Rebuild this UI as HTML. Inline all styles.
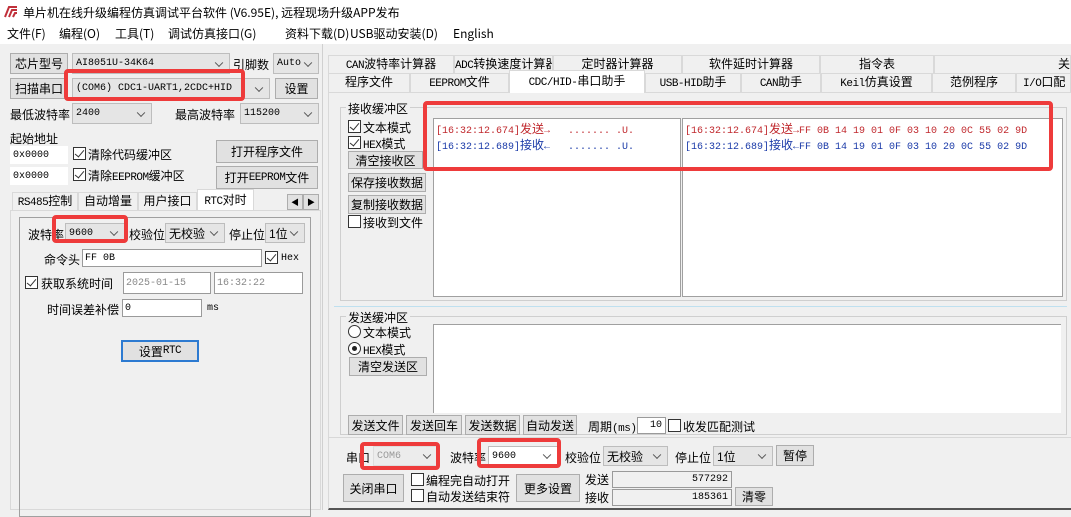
<!DOCTYPE html><html><head><meta charset="utf-8"><style>
*{box-sizing:border-box;margin:0;padding:0}
body{width:1071px;height:510px;overflow:hidden;background:#f0f0f0;font:12px "Liberation Sans","Noto Sans CJK SC",sans-serif;color:#000;position:relative}
.a{position:absolute;white-space:nowrap}
.btn{position:absolute;background:#e1e1e1;border:1px solid #adadad;text-align:center;display:flex;align-items:center;justify-content:center;white-space:nowrap;font-size:12px}
.cb{position:absolute;background:#e5e5e5;border:1px solid #bdbdbd;padding-left:3px;display:flex;align-items:center;font-family:"Liberation Mono","Noto Sans CJK SC",monospace;font-size:10px;white-space:nowrap;overflow:hidden}
.cb.z{font-family:"Liberation Sans","Noto Sans CJK SC",sans-serif;font-size:12px}
.cb::after{content:"";position:absolute;right:7px;top:50%;width:5px;height:5px;border-right:1px solid #555;border-bottom:1px solid #555;transform:translateY(-70%) rotate(45deg)}
.in{position:absolute;background:#fff;border:1px solid #9a9a9a;padding-left:2px;display:flex;align-items:center;font-family:"Liberation Mono",monospace;font-size:10px}
.ck{position:absolute;width:13px;height:13px;border:1px solid #333;background:#fff}
.ck.on::after{content:"";position:absolute;left:3px;top:0px;width:4px;height:8px;border-right:1.5px solid #333;border-bottom:1.5px solid #333;transform:rotate(40deg)}
.rd{position:absolute;width:13px;height:13px;border:1px solid #333;border-radius:50%;background:#fff}
.rd.on::after{content:"";position:absolute;left:3px;top:3px;width:5px;height:5px;border-radius:50%;background:#222}
.red{position:absolute;border:4px solid #ee3b3b;border-radius:4px}
.tab{position:absolute;border:1px solid #d9d9d9;border-bottom:none;background:#f0f0f0;text-align:center;font-size:12px;line-height:17px;white-space:nowrap;overflow:hidden}
.m{font-family:"Liberation Mono",monospace;font-size:11px;letter-spacing:-0.5px}
.mono{font-family:"Liberation Mono","Noto Sans CJK SC",monospace;font-size:10px}
.mono b{font-weight:normal;font-family:"Noto Sans CJK SC",sans-serif;font-size:12px}
</style></head><body>
<div class="a" style="left:0;top:0;width:1071px;height:22px;background:#fff"></div>
<svg class="a" style="left:4px;top:4px" width="14" height="14"><path d="M1 13 L5 3 L13 3" stroke="#c0303a" stroke-width="2" fill="none"/><path d="M5 13 L8 6 L13 6 M9 13 L11 9 L13 9" stroke="#c0303a" stroke-width="2" fill="none"/></svg>
<div class="a" style="left:23px;top:4px;font-size:12px;font-family:'Noto Sans CJK SC',sans-serif">单片机在线升级编程仿真调试平台软件 (V6.95E), 远程现场升级APP发布</div>
<div class="a" style="left:0;top:22px;width:1071px;height:22px;background:#fff;font-size:12px;font-family:'Noto Sans CJK SC',sans-serif"><span class="a" style="left:7px;top:3px">文件(F)</span><span class="a" style="left:59px;top:3px">编程(O)</span><span class="a" style="left:115px;top:3px">工具(T)</span><span class="a" style="left:168px;top:3px">调试仿真接口(G)</span><span class="a" style="left:285px;top:3px">资料下载(D)</span><span class="a" style="left:350px;top:3px">USB驱动安装(D)</span><span class="a" style="left:453px;top:3px">English</span></div>

<!-- left -->
<div class="btn" style="left:10px;top:53px;width:58px;height:21px">芯片型号</div>
<div class="cb" style="left:72px;top:53px;width:158px;height:21px">AI8051U-34K64</div>
<div class="a" style="left:233px;top:56px">引脚数</div>
<div class="cb" style="left:273px;top:53px;width:46px;height:21px">Auto</div>
<div class="btn" style="left:10px;top:78px;width:58px;height:21px">扫描串口</div>
<div class="cb" style="left:72px;top:78px;width:198px;height:21px">(COM6) CDC1-UART1,2CDC+HID</div>
<div class="red" style="left:64px;top:69px;width:181px;height:32px"></div>
<div class="btn" style="left:275px;top:78px;width:43px;height:21px">设置</div>
<div class="a" style="left:10px;top:106px">最低波特率</div>
<div class="cb" style="left:72px;top:103px;width:80px;height:21px">2400</div>
<div class="a" style="left:175px;top:106px">最高波特率</div>
<div class="cb" style="left:240px;top:103px;width:79px;height:21px">115200</div>
<div class="a" style="left:10px;top:130px">起始地址</div>
<div class="in" style="left:10px;top:146px;width:58px;height:18px;border-color:#fff">0x0000</div>
<div class="ck on" style="left:73px;top:147px"></div><div class="a" style="left:88px;top:146px">清除代码缓冲区</div>
<div class="btn" style="left:216px;top:140px;width:102px;height:23px">打开程序文件</div>
<div class="in" style="left:10px;top:167px;width:58px;height:18px;border-color:#fff">0x0000</div>
<div class="ck on" style="left:73px;top:168px"></div><div class="a" style="left:88px;top:167px">清除<span class="m">EEPROM</span>缓冲区</div>
<div class="btn" style="left:216px;top:166px;width:102px;height:23px">打开<span class="m">EEPROM</span>文件</div>
<div class="tab" style="left:12px;top:192px;width:66px;height:19px"><span class="m">RS485</span>控制</div>
<div class="tab" style="left:78px;top:192px;width:60px;height:19px">自动增量</div>
<div class="tab" style="left:138px;top:192px;width:59px;height:19px">用户接口</div>
<div class="tab" style="left:197px;top:189px;width:57px;height:22px;background:#fff;line-height:20px"><span class="m">RTC</span>对时</div>
<div class="btn" style="left:287px;top:194px;width:16px;height:16px;font-size:8px">◀</div><div class="btn" style="left:303px;top:194px;width:16px;height:16px;font-size:8px">▶</div>
<div class="a" style="left:10px;top:210px;width:311px;height:300px;border:1px solid #d9d9d9;background:#f0f0f0"></div>
<div class="a" style="left:19px;top:217px;width:292px;height:300px;border:1px solid #a0a0a0"></div>
<div class="a" style="left:28px;top:226px">波特率</div>
<div class="cb" style="left:65px;top:223px;width:60px;height:20px">9600</div>
<div class="red" style="left:52px;top:215px;width:76px;height:28px"></div>
<div class="a" style="left:129px;top:226px">校验位</div>
<div class="cb z" style="left:165px;top:223px;width:60px;height:20px">无校验</div>
<div class="a" style="left:229px;top:226px">停止位</div>
<div class="cb z" style="left:265px;top:223px;width:40px;height:20px">1位</div>
<div class="a" style="left:44px;top:251px">命令头</div>
<div class="in" style="left:82px;top:249px;width:180px;height:18px">FF 0B</div>
<div class="ck on" style="left:265px;top:251px"></div><div class="a mono" style="left:281px;top:253px">Hex</div>
<div class="ck on" style="left:25px;top:276px"></div><div class="a" style="left:41px;top:275px">获取系统时间</div>
<div class="in" style="left:123px;top:272px;width:88px;height:22px;color:#888">2025-01-15</div>
<div class="in" style="left:214px;top:272px;width:89px;height:22px;color:#888">16:32:22</div>
<div class="a" style="left:47px;top:301px">时间误差补偿</div>
<div class="in" style="left:122px;top:299px;width:80px;height:18px">0</div>
<div class="a mono" style="left:207px;top:303px">ms</div>
<div class="btn" style="left:121px;top:340px;width:78px;height:22px;border:2px solid #2c7ad1">设置<span class="m">RTC</span></div>
<div class="a" style="left:322px;top:44px;width:1px;height:466px;background:#d0d0d0"></div>

<!-- right tabs -->
<div class="tab" style="left:328px;top:55px;width:126px;height:18px"><span class="m">CAN</span>波特率计算器</div>
<div class="tab" style="left:454px;top:55px;width:99px;height:18px"><span class="m">ADC</span>转换速度计算器</div>
<div class="tab" style="left:553px;top:55px;width:129px;height:18px">定时器计算器</div>
<div class="tab" style="left:682px;top:55px;width:138px;height:18px">软件延时计算器</div>
<div class="tab" style="left:820px;top:55px;width:114px;height:18px">指令表</div>
<div class="tab" style="left:934px;top:55px;width:137px;height:18px;text-align:right">关</div>
<div class="tab" style="left:328px;top:73px;width:82px;height:19px">程序文件</div>
<div class="tab" style="left:410px;top:73px;width:99px;height:19px"><span class="m">EEPROM</span>文件</div>
<div class="tab" style="left:509px;top:70px;width:136px;height:23px;background:#fff;line-height:20px;z-index:2"><span class="m">CDC/HID-</span>串口助手</div>
<div class="tab" style="left:645px;top:73px;width:96px;height:19px"><span class="m">USB-HID</span>助手</div>
<div class="tab" style="left:741px;top:73px;width:80px;height:19px"><span class="m">CAN</span>助手</div>
<div class="tab" style="left:821px;top:73px;width:111px;height:19px"><span class="m">Keil</span>仿真设置</div>
<div class="tab" style="left:932px;top:73px;width:84px;height:19px">范例程序</div>
<div class="tab" style="left:1016px;top:73px;width:55px;height:19px;text-align:left;padding-left:6px"><span class="m">I/O</span>口配</div>
<div class="a" style="left:328px;top:92px;width:745px;height:418px;border:1px solid #d9d9d9;border-bottom:2px solid #555"></div>

<div class="a" style="left:340px;top:107px;width:727px;height:194px;border:1px solid #cfcfcf"></div>
<div class="a" style="left:346px;top:100px;background:#f0f0f0;padding:0 2px">接收缓冲区</div>
<div class="ck on" style="left:348px;top:120px"></div><div class="a" style="left:363px;top:119px">文本模式</div>
<div class="ck on" style="left:348px;top:136px"></div><div class="a" style="left:363px;top:135px"><span class="m">HEX</span>模式</div>
<div class="btn" style="left:348px;top:151px;width:75px;height:18px">清空接收区</div>
<div class="btn" style="left:348px;top:173px;width:78px;height:19px">保存接收数据</div>
<div class="btn" style="left:348px;top:195px;width:78px;height:19px">复制接收数据</div>
<div class="ck" style="left:348px;top:215px"></div><div class="a" style="left:363px;top:214px">接收到文件</div>
<div class="a" style="left:433px;top:118px;width:248px;height:179px;background:#fff;border:1px solid #a0a0a0"></div>
<div class="a" style="left:682px;top:118px;width:381px;height:179px;background:#fff;border:1px solid #a0a0a0"></div>
<div class="a mono" style="left:436px;top:120px;color:#c0282d">[16:32:12.674]<b>发送</b>→&nbsp;&nbsp;&nbsp;....... .U.</div>
<div class="a mono" style="left:436px;top:136px;color:#1a3aa8">[16:32:12.689]<b>接收</b>←&nbsp;&nbsp;&nbsp;....... .U.</div>
<div class="a mono" style="left:685px;top:120px;color:#c0282d">[16:32:12.674]<b>发送</b>→FF 0B 14 19 01 0F 03 10 20 0C 55 02 9D</div>
<div class="a mono" style="left:685px;top:136px;color:#1a3aa8">[16:32:12.689]<b>接收</b>←FF 0B 14 19 01 0F 03 10 20 0C 55 02 9D</div>
<div class="red" style="left:423px;top:101px;width:630px;height:70px"></div>
<div class="a" style="left:334px;top:306px;width:733px;height:1px;background:#bfe0ef"></div>

<div class="a" style="left:340px;top:316px;width:727px;height:119px;border:1px solid #cfcfcf"></div>
<div class="a" style="left:346px;top:309px;background:#f0f0f0;padding:0 2px">发送缓冲区</div>
<div class="rd" style="left:348px;top:325px"></div><div class="a" style="left:363px;top:324px">文本模式</div>
<div class="rd on" style="left:348px;top:342px"></div><div class="a" style="left:363px;top:341px"><span class="m">HEX</span>模式</div>
<div class="btn" style="left:349px;top:357px;width:78px;height:19px">清空发送区</div>
<div class="a" style="left:433px;top:324px;width:628px;height:89px;background:#fff;border-top:1px solid #a0a0a0;border-left:1px solid #a0a0a0"></div>
<div class="btn" style="left:348px;top:415px;width:55px;height:20px">发送文件</div>
<div class="btn" style="left:406px;top:415px;width:56px;height:20px">发送回车</div>
<div class="btn" style="left:465px;top:415px;width:55px;height:20px">发送数据</div>
<div class="btn" style="left:523px;top:415px;width:54px;height:20px">自动发送</div>
<div class="a" style="left:588px;top:418px">周期<span class="m">(ms)</span></div>
<div class="in" style="left:637px;top:417px;width:29px;height:17px;justify-content:flex-end;padding-right:3px">10</div>
<div class="ck" style="left:668px;top:419px"></div><div class="a" style="left:683px;top:418px">收发匹配测试</div>
<div class="a" style="left:329px;top:437px;width:742px;height:1px;background:#d8d8d8"></div>

<div class="a" style="left:346px;top:449px">串口</div>
<div class="cb" style="left:373px;top:446px;width:65px;height:20px;color:#999;background:#ececec;border-color:#ddd">COM6</div>
<div class="red" style="left:360px;top:442px;width:80px;height:28px"></div>
<div class="a" style="left:450px;top:449px">波特率</div>
<div class="cb" style="left:488px;top:446px;width:70px;height:20px;background:#fff">9600</div>
<div class="red" style="left:477px;top:438px;width:84px;height:30px"></div>
<div class="a" style="left:565px;top:449px">校验位</div>
<div class="cb z" style="left:603px;top:446px;width:65px;height:20px">无校验</div>
<div class="a" style="left:675px;top:449px">停止位</div>
<div class="cb z" style="left:713px;top:446px;width:60px;height:20px">1位</div>
<div class="btn" style="left:776px;top:445px;width:38px;height:21px">暂停</div>
<div class="btn" style="left:343px;top:474px;width:61px;height:28px">关闭串口</div>
<div class="ck" style="left:411px;top:473px"></div><div class="a" style="left:426px;top:472px">编程完自动打开</div>
<div class="ck" style="left:411px;top:489px"></div><div class="a" style="left:426px;top:488px">自动发送结束符</div>
<div class="btn" style="left:516px;top:474px;width:64px;height:28px">更多设置</div>
<div class="a" style="left:585px;top:471px">发送</div>
<div class="in" style="left:612px;top:471px;width:120px;height:17px;background:#f0f0f0;justify-content:flex-end;padding-right:3px">577292</div>
<div class="a" style="left:585px;top:489px">接收</div>
<div class="in" style="left:612px;top:489px;width:120px;height:17px;background:#f0f0f0;justify-content:flex-end;padding-right:3px">185361</div>
<div class="btn" style="left:735px;top:487px;width:38px;height:19px">清零</div>
</body></html>
